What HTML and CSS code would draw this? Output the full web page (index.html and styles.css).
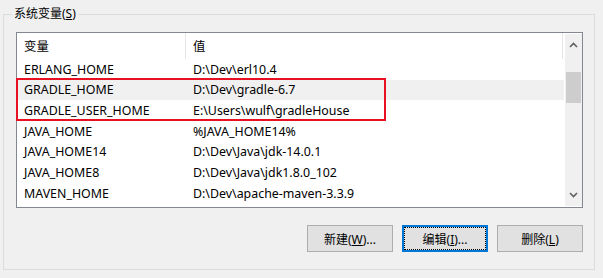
FILE: index.html
```html
<!DOCTYPE html>
<html lang="zh-CN">
  <head>
    <meta charset="UTF-8" />
    <meta name="viewport" content="width=device-width, initial-scale=1.0" />
    <title>系统变量</title>
    <link rel="stylesheet" href="styles.css">
  </head>
  <body>
    <fieldset class="group">
      <legend>系统变量(<u>S</u>)</legend>
      <div class="listbox">
        <div class="table">
          <div class="row head">
            <div class="cell name">变量</div>
            <div class="cell value">值</div>
          </div>
          <div class="row">
            <div class="cell name">ERLANG_HOME</div>
            <div class="cell value">D:\Dev\erl10.4</div>
          </div>
          <div class="row selected">
            <div class="cell name">GRADLE_HOME</div>
            <div class="cell value">D:\Dev\gradle-6.7</div>
          </div>
          <div class="row">
            <div class="cell name">GRADLE_USER_HOME</div>
            <div class="cell value">E:\Users\wulf\gradleHouse</div>
          </div>
          <div class="row">
            <div class="cell name">JAVA_HOME</div>
            <div class="cell value">%JAVA_HOME14%</div>
          </div>
          <div class="row">
            <div class="cell name">JAVA_HOME14</div>
            <div class="cell value">D:\Dev\Java\jdk-14.0.1</div>
          </div>
          <div class="row">
            <div class="cell name">JAVA_HOME8</div>
            <div class="cell value">D:\Dev\Java\jdk1.8.0_102</div>
          </div>
          <div class="row">
            <div class="cell name">MAVEN_HOME</div>
            <div class="cell value">D:\Dev\apache-maven-3.3.9</div>
          </div>
          <!-- red box marking the two gradle rows -->
          <div class="mark"></div>
        </div>
        <div class="scrollbar">
          <svg class="arrow" width="9" height="6" viewBox="0 0 9 6">
            <path d="M1 5 L4.5 1.5 L8 5" fill="none" stroke="#606060" stroke-width="1.6"/>
          </svg>
          <div class="track">
            <div class="thumb"></div>
          </div>
          <svg class="arrow" width="9" height="6" viewBox="0 0 9 6">
            <path d="M1 1 L4.5 4.5 L8 1" fill="none" stroke="#606060" stroke-width="1.6"/>
          </svg>
        </div>
      </div>
      <div class="buttons">
        <button>新建(<u>W</u>)...</button>
        <button class="focused">编辑(<u>I</u>)...</button>
        <button>删除(<u>L</u>)</button>
      </div>
    </fieldset>
  </body>
</html>
```

FILE: styles.css
```css
* {
  margin: 0;
  padding: 0;
  box-sizing: border-box;
}
body {
  width: 603px;
  height: 278px;
  background-color: #f0f0f0;
  font-family: "Noto Sans", "Noto Sans CJK SC", sans-serif;
  font-size: 12px;
  color: #000;
  padding: 6px 8px 0 3px;
  overflow: hidden;
}
.group {
  border: 1px solid #dcdcdc;
  height: 264px;
  padding: 0 11px 0 12px;
}
.group legend {
  margin-left: -4px;
  padding: 0 3px 0 2px;
  line-height: 16px;
  color: #000;
}
.listbox {
  margin-top: 10px;
  height: 176px;
  border: 1px solid #828790;
  background-color: #fff;
  display: flex;
}
.table {
  flex: 1;
  position: relative;
  font-size: 12.4px;
}
.row {
  display: flex;
  height: 20.67px;
  align-items: center;
}
.row.head {
  height: 26px;
}
.row.selected {
  background-color: #f0f0f0;
}
.cell {
  white-space: nowrap;
  padding-left: 7px;
}
.cell.name {
  width: 169px;
}
.cell.value {
  width: 377px;
}
.head .cell {
  height: 100%;
  display: flex;
  align-items: center;
  border-right: 1px solid #e5e5e5;
}
.mark {
  position: absolute;
  left: -1px;
  top: 45px;
  width: 370px;
  height: 43px;
  border: 2px solid #e81123;
}
.scrollbar {
  width: 17px;
  margin: 1px 0 1px 1px;
  background-color: #f0f0f0;
  display: flex;
  flex-direction: column;
  align-items: center;
}
.arrow {
  margin: 8px 0;
}
.track {
  flex: 1;
  width: 100%;
  padding: 16px 1px 0 1px;
}
.thumb {
  height: 31px;
  background-color: #cdcdcd;
}
.buttons {
  display: flex;
  justify-content: flex-end;
  gap: 9px;
  margin-top: 17px;
}
.buttons button {
  width: 86px;
  height: 27px;
  font-family: inherit;
  font-size: 12px;
  color: #000;
  background-color: #e1e1e1;
  border: 1px solid #adadad;
}
.buttons button.focused {
  border: 2px solid #0078d7;
  outline: 1px dotted #000;
  outline-offset: -3px;
}
```
